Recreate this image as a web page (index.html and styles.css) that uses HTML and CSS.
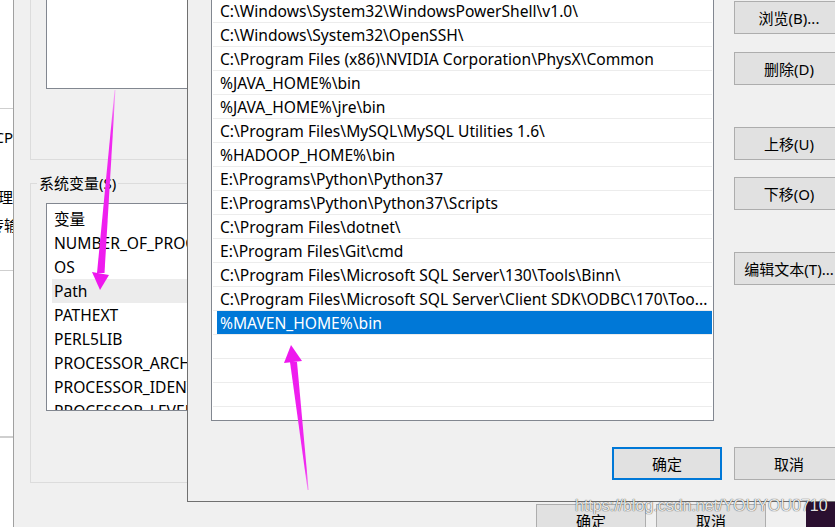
FILE: index.html
```html
<!DOCTYPE html>
<html lang="zh-CN">
<head>
	<meta charset="UTF-8">
	<meta name="viewport" content="width=device-width, initial-scale=1.0">
	<title>编辑环境变量</title>
	<link rel="stylesheet" href="styles.css">
</head>
<body>

<div class="screen">

	<!-- Window behind, only a sliver of it shows -->
	<div class="back-window">
		<div class="back-section top-section"></div>
		<div class="back-section text-section">
			<div class="back-line line-cp"><span>TCP</span></div>
			<div class="back-line line-a"><span>处理</span></div>
			<div class="back-line line-b"><span>安全传输</span></div>
		</div>
		<div class="back-section mid-section"></div>
		<div class="back-section"></div>
	</div>

	<!-- 环境变量 dialog -->
	<div class="env-dialog">
		<div class="group user-group">
			<div class="listbox user-list"></div>
		</div>

		<fieldset class="group sys-group">
			<legend>系统变量(S)</legend>
			<div class="listbox sys-list">
				<div class="var-row">变量</div>
				<div class="var-row">NUMBER_OF_PROCESSORS</div>
				<div class="var-row">OS</div>
				<div class="var-row hover">Path</div>
				<div class="var-row">PATHEXT</div>
				<div class="var-row">PERL5LIB</div>
				<div class="var-row">PROCESSOR_ARCHITECTURE</div>
				<div class="var-row">PROCESSOR_IDENTIFIER</div>
				<div class="var-row">PROCESSOR_LEVEL</div>
			</div>
		</fieldset>

		<div class="dialog-footer env-footer">
			<button class="btn">确定</button>
			<button class="btn">取消</button>
		</div>
	</div>

	<div class="desktop"></div>
</div>

<!-- 编辑环境变量 dialog, on top -->
<div class="edit-dialog">
	<div class="path-list">
		<div class="path-rows">
			<div class="path-row">C:\Windows\System32\WindowsPowerShell\v1.0\</div>
			<div class="path-row">C:\Windows\System32\OpenSSH\</div>
			<div class="path-row">C:\Program Files (x86)\NVIDIA Corporation\PhysX\Common</div>
			<div class="path-row">%JAVA_HOME%\bin</div>
			<div class="path-row">%JAVA_HOME%\jre\bin</div>
			<div class="path-row">C:\Program Files\MySQL\MySQL Utilities 1.6\</div>
			<div class="path-row">%HADOOP_HOME%\bin</div>
			<div class="path-row">E:\Programs\Python\Python37</div>
			<div class="path-row">E:\Programs\Python\Python37\Scripts</div>
			<div class="path-row">C:\Program Files\dotnet\</div>
			<div class="path-row">E:\Program Files\Git\cmd</div>
			<div class="path-row">C:\Program Files\Microsoft SQL Server\130\Tools\Binn\</div>
			<div class="path-row">C:\Program Files\Microsoft SQL Server\Client SDK\ODBC\170\Too...</div>
			<div class="path-row selected">%MAVEN_HOME%\bin</div>
			<div class="path-row"></div>
			<div class="path-row"></div>
			<div class="path-row"></div>
			<div class="path-row"></div>
		</div>
	</div>

	<div class="side-buttons">
		<button class="btn btn-browse">浏览(B)...</button>
		<button class="btn btn-delete">删除(D)</button>
		<button class="btn btn-up">上移(U)</button>
		<button class="btn btn-down">下移(O)</button>
		<button class="btn btn-text">编辑文本(T)...</button>
	</div>

	<div class="dialog-footer edit-footer">
		<button class="btn btn-default">确定</button>
		<button class="btn">取消</button>
	</div>
</div>

<div class="watermark">https://blog.csdn.net/YOUYOU0710</div>

<!-- Hand drawn arrows -->
<svg class="arrows" width="835" height="527" viewBox="0 0 835 527">
	<defs>
		<linearGradient id="fade1" x1="0" y1="90" x2="0" y2="290" gradientUnits="userSpaceOnUse">
			<stop offset="0" stop-color="#f7a8f7"/>
			<stop offset="0.2" stop-color="#f02af0"/>
			<stop offset="1" stop-color="#ee18ee"/>
		</linearGradient>
		<linearGradient id="fade2" x1="0" y1="490" x2="0" y2="345" gradientUnits="userSpaceOnUse">
			<stop offset="0" stop-color="#f590f5"/>
			<stop offset="0.15" stop-color="#f02af0"/>
			<stop offset="1" stop-color="#ee18ee"/>
		</linearGradient>
	</defs>
	<polygon fill="url(#fade1)" points="114.6,90 115.4,90 104.5,273 97,273"/>
	<polygon fill="#ee18ee" points="92,272 109,275 100,290"/>
	<polygon fill="url(#fade2)" points="290,362 297,362 308.6,490 307.6,490"/>
	<polygon fill="#ee18ee" points="291,345 284,363 302,361"/>
</svg>

</body>
</html>
```

FILE: styles.css
```css
	* {
		box-sizing: border-box;
		}

	body {
		margin: 0;
		padding: 0;
		width: 835px;
		height: 527px;
		overflow: hidden;
		position: relative;
		background-color: white;
		color: black;
		font-family: "Noto Sans", "Noto Sans CJK SC", sans-serif;
		font-size: 15px;
		}

	.screen {
		display: flex;
		height: 527px;
		}

	/* Window in the far back */
	.back-window {
		width: 13px;
		flex-shrink: 0;
		background: white;
		display: flex;
		flex-direction: column;
		}

	.back-section {
		border-bottom: 1px solid #cfcfcf;
		}

	.top-section {
		height: 109px;
		}

	.text-section {
		height: 162px;
		padding-top: 18px;
		}

	.mid-section {
		height: 166px;
		}

	.back-line {
		display: flex;
		justify-content: flex-end; /* overflow goes to the left */
		overflow: hidden;
		white-space: nowrap;
		line-height: 20px;
		}

	.line-a {
		margin-top: 40px;
		}

	.line-b {
		margin-top: 8px;
		}

	.line-b span {
		margin-right: -6px;
		}

	/* 环境变量 dialog */
	.env-dialog {
		width: 793px;
		flex-shrink: 0;
		background: #f0f0f0;
		border-left: 1px solid #a0a0a0;
		padding: 0 16px;
		}

	.group {
		border: 1px solid #dcdcdc;
		margin: 0;
		}

	.user-group {
		height: 160px;
		border-top: none;
		padding: 0 15px;
		}

	.listbox {
		background: white;
		border: 1px solid #828790;
		overflow: hidden;
		}

	.user-list {
		width: 300px;
		height: 89px;
		border-top: none;
		}

	.sys-group {
		margin-top: 13px;
		padding: 10px 15px 71px 15px;
		}

	.sys-group legend {
		padding: 0 2px;
		margin-left: -9px;
		line-height: 20px;
		}

	.sys-list {
		width: 300px;
		height: 208px;
		padding-top: 3px;
		font-size: 15.6px;
		}

	.var-row {
		height: 24px;
		line-height: 24px;
		margin-left: 5px;
		padding-left: 2px;
		white-space: nowrap;
		}

	.var-row.hover {
		background: #ececec;
		}

	.dialog-footer {
		display: flex;
		justify-content: flex-end;
		}

	.env-footer {
		margin-top: 21px;
		padding-right: 24px;
		gap: 10px;
		}

	.desktop {
		flex: 1;
		background: #2b1030;
		}

	/* Buttons */
	.btn {
		width: 110px;
		height: 33px;
		flex-shrink: 0;
		padding: 0;
		background: #e1e1e1;
		border: 1px solid #adadad;
		font-family: inherit;
		font-size: 15px;
		color: black;
		white-space: nowrap;
		}

	.btn-default {
		border: 2px solid #0078d7;
		}

	/* 编辑环境变量 dialog */
	.edit-dialog {
		position: absolute; /* window sitting over the other one */
		left: 187px;
		top: 0;
		width: 681px;
		height: 502px;
		background: #f0f0f0;
		border: 1px solid #707070;
		border-top: none;
		padding: 0 23px 21px 23px;
		display: grid;
		grid-template-columns: 503px 110px;
		grid-template-rows: 421px 33px;
		column-gap: 20px;
		row-gap: 26px;
		}

	.path-list {
		background: white;
		border: 1px solid #828790;
		border-top: none;
		overflow: hidden;
		padding: 0 1px;
		font-size: 15.6px;
		}

	.path-rows {
		margin-top: -1px;
		}

	.path-row {
		height: 24px;
		line-height: 24px;
		padding-left: 7px;
		border-bottom: 1px solid #ececec;
		white-space: nowrap;
		overflow: hidden;
		}

	.path-row.selected {
		color: white;
		background: linear-gradient(#0078d7, #0078d7) 4px 0 / calc(100% - 4px) 100% no-repeat;
		}

	.side-buttons {
		display: flex;
		flex-direction: column;
		padding-top: 1px;
		}

	.btn-delete {
		margin-top: 18px;
		}

	.btn-up {
		margin-top: 42px;
		}

	.btn-down {
		margin-top: 17px;
		}

	.btn-text {
		margin-top: 42px;
		}

	.edit-footer {
		grid-column: 1 / 3;
		gap: 12px;
		}

	.watermark {
		position: absolute; /* stamped over the screenshot */
		left: 575px;
		top: 497px;
		font-family: "Liberation Sans", Arial, sans-serif;
		font-size: 16px;
		color: rgba(255, 255, 255, 0.9);
		text-shadow: 0 0 1px rgba(0, 0, 0, 0.7), 0 0 1px rgba(0, 0, 0, 0.4);
		white-space: nowrap;
		}

	.arrows {
		position: absolute;
		left: 0;
		top: 0;
		pointer-events: none;
		}
```
